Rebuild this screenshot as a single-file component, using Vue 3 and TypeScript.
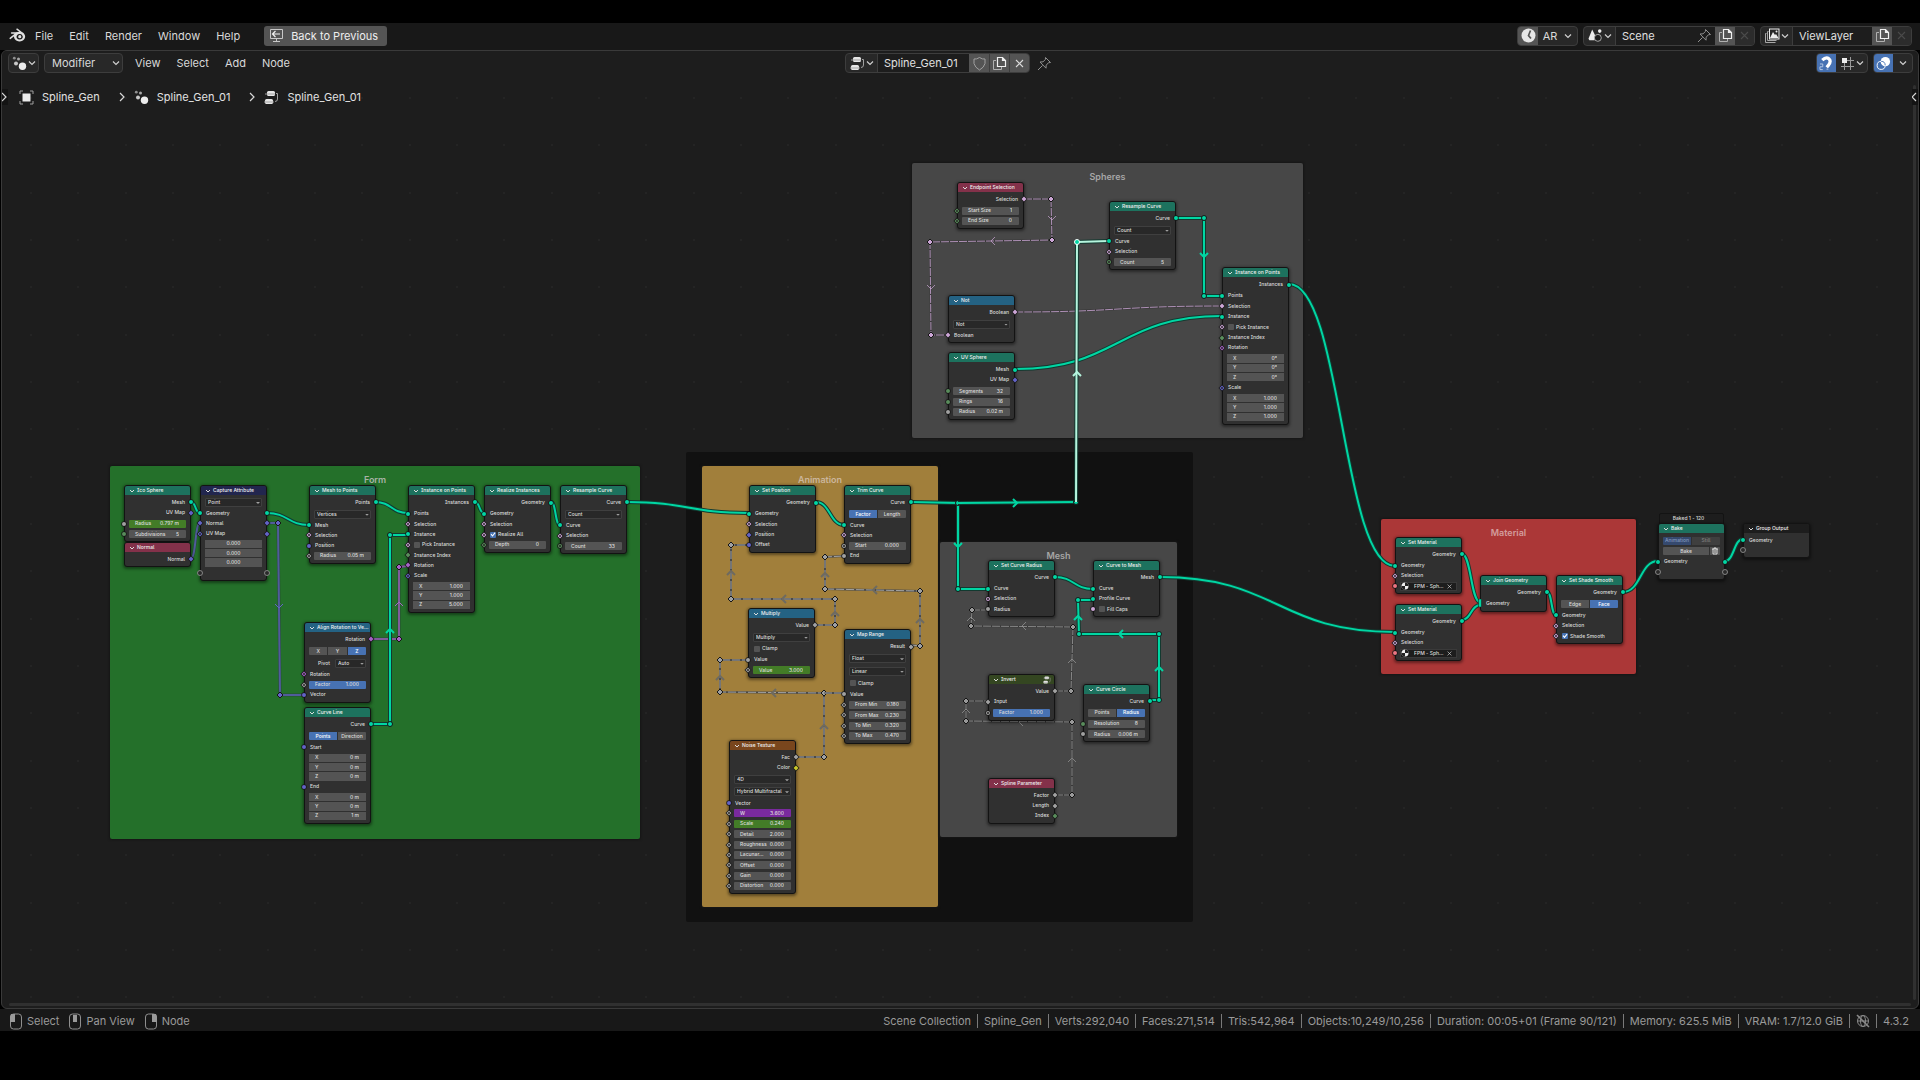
<script setup lang="ts">
import { computed } from 'vue'

type Kind = 'out' | 'in' | 'num' | 'check' | 'pick' | 'seg' | 'vec' | 'ext' | 'gap' | 'mat' | 'bake'
interface Row {
  kind: Kind
  units: number
  label?: string
  value?: string
  left?: string
  right?: string
  tone?: string
  on?: boolean
  items?: string[]
  active?: number
  bare?: boolean
}
interface GraphNode {
  title: string
  tone: string
  x: number
  y: number
  rows: Row[]
  group?: boolean
}
interface Link {
  tone: string
  style: 'solid' | 'field'
  points: number[][]
  curve?: boolean
  arrows?: [number, number, number][]
  joints?: number[][]
}

/* Screen pixels for one node unit at the current zoom */
const ZOOM = 0.475
/* Corner of the editor's drawing region */
const view = { x: 2, y: 51 }

const socketColor: Record<string, string> = {
  geo: '#00d6a3', vec: '#6363c7', bool: '#cca6d6', float: '#a1a1a1',
  int: '#598c5c', rot: '#a663c7', mat: '#eb7582', color: '#c7c729', ext: '#8a8a8a',
}

const out = (label: string, right: string): Row => ({ kind: 'out', units: 22, label, right })
const inp = (label: string, left: string, right?: string): Row => ({ kind: 'in', units: 22, label, left, right })
const num = (label: string, value: string, left: string, tone = ''): Row => ({ kind: 'num', units: 22, label, value, left, tone })
const check = (label: string, on: boolean, left = ''): Row => ({ kind: 'check', units: left ? 22 : 25, label, on, left })
const pick = (value: string, units = 25, label = ''): Row => ({ kind: 'pick', units, value, label })
const seg = (items: string[], active: number, units = 25, tone = ''): Row => ({ kind: 'seg', units, items, active, tone })
const vec = (items: string[], bare = false): Row => ({ kind: 'vec', units: 62, items, bare })
const gap: Row = { kind: 'gap', units: 2 }
const mat = (): Row => ({ kind: 'mat', units: 22, left: 'mat:o', value: 'FPM - Sph...' })

const setMaterial = (): Row[] => [out('Geometry', 'geo:o'), gap, inp('Geometry', 'geo:o'), inp('Selection', 'bool:D'), mat()]

const nodes: GraphNode[] = [
  { title: 'Ico Sphere', tone: 'geometry', x: 124, y: 485, rows: [out('Mesh', 'geo:o'), out('UV Map', 'vec:d'), gap, num('Radius', '0.797 m', 'float:o', 'keyed'), num('Subdivisions', '5', 'int:o')] },
  { title: 'Normal', tone: 'input', x: 124, y: 542, rows: [out('Normal', 'vec:d')] },
  { title: 'Capture Attribute', tone: 'attribute', x: 200, y: 485, rows: [pick('Point', 23), inp('Geometry', 'geo:o', 'geo:o'), inp('Normal', 'vec:d', 'vec:d'), inp('UV Map', 'vec:D', 'vec:d'), vec(['0.000', '0.000', '0.000'], true), { kind: 'ext', units: 22, left: 'ext:e', right: 'ext:e' }] },
  { title: 'Mesh to Points', tone: 'geometry', x: 309, y: 485, rows: [out('Points', 'geo:o'), gap, pick('Vertices'), inp('Mesh', 'geo:o'), inp('Selection', 'bool:D'), inp('Position', 'vec:o'), num('Radius', '0.05 m', 'float:D')] },
  { title: 'Instance on Points', tone: 'geometry', x: 408, y: 485, rows: [out('Instances', 'geo:o'), gap, inp('Points', 'geo:o'), inp('Selection', 'bool:D'), inp('Instance', 'geo:o'), check('Pick Instance', false, 'bool:D'), inp('Instance Index', 'int:d'), inp('Rotation', 'rot:d'), inp('Scale', 'vec:D'), vec(['1.000', '1.000', '5.000'])] },
  { title: 'Realize Instances', tone: 'geometry', x: 484, y: 485, rows: [out('Geometry', 'geo:o'), gap, inp('Geometry', 'geo:o'), inp('Selection', 'bool:D'), check('Realize All', true, 'bool:D'), num('Depth', '0', 'int:D')] },
  { title: 'Resample Curve', tone: 'geometry', x: 560, y: 485, rows: [out('Curve', 'geo:o'), gap, pick('Count'), inp('Curve', 'geo:o'), inp('Selection', 'bool:D'), num('Count', '33', 'int:O')] },
  { title: 'Align Rotation to Ve...', tone: 'converter', x: 304, y: 622, rows: [out('Rotation', 'rot:d'), gap, seg(['X', 'Y', 'Z'], 2), pick('Auto', 26, 'Pivot'), inp('Rotation', 'rot:D'), num('Factor', '1.000', 'float:D', 'full'), inp('Vector', 'vec:o')] },
  { title: 'Curve Line', tone: 'geometry', x: 304, y: 707, rows: [out('Curve', 'geo:o'), gap, seg(['Points', 'Direction'], 0), inp('Start', 'vec:o'), vec(['0 m', '0 m', '0 m']), inp('End', 'vec:o'), vec(['0 m', '0 m', '1 m'])] },
  { title: 'Set Position', tone: 'geometry', x: 749, y: 485, rows: [out('Geometry', 'geo:o'), gap, inp('Geometry', 'geo:o'), inp('Selection', 'bool:D'), inp('Position', 'vec:d'), inp('Offset', 'vec:o')] },
  { title: 'Trim Curve', tone: 'geometry', x: 844, y: 485, rows: [out('Curve', 'geo:o'), gap, seg(['Factor', 'Length'], 0), inp('Curve', 'geo:o'), inp('Selection', 'bool:D'), num('Start', '0.000', 'float:O'), inp('End', 'float:o')] },
  { title: 'Multiply', tone: 'converter', x: 748, y: 608, rows: [out('Value', 'float:d'), gap, pick('Multiply'), check('Clamp', false), inp('Value', 'float:o'), num('Value', '3.000', 'float:D', 'keyed')] },
  { title: 'Map Range', tone: 'converter', x: 844, y: 629, rows: [out('Result', 'float:d'), gap, pick('Float', 26), pick('Linear', 26), check('Clamp', false), inp('Value', 'float:o'), num('From Min', '0.180', 'float:D'), num('From Max', '0.230', 'float:D'), num('To Min', '0.320', 'float:D'), num('To Max', '0.470', 'float:D')] },
  { title: 'Noise Texture', tone: 'texture', x: 729, y: 740, rows: [out('Fac', 'float:d'), out('Color', 'color:d'), gap, pick('4D'), pick('Hybrid Multifractal', 26), inp('Vector', 'vec:o'), num('W', '3.600', 'float:D', 'driven'), num('Scale', '0.240', 'float:D', 'keyed'), num('Detail', '2.000', 'float:D'), num('Roughness', '0.000', 'float:D'), num('Lacunar...', '0.000', 'float:D'), num('Offset', '0.000', 'float:D'), num('Gain', '0.000', 'float:D'), num('Distortion', '0.000', 'float:D')] },
  { title: 'Set Curve Radius', tone: 'geometry', x: 988, y: 560, rows: [out('Curve', 'geo:o'), gap, inp('Curve', 'geo:o'), inp('Selection', 'bool:O'), inp('Radius', 'float:o')] },
  { title: 'Curve to Mesh', tone: 'geometry', x: 1093, y: 560, rows: [out('Mesh', 'geo:o'), gap, inp('Curve', 'geo:o'), inp('Profile Curve', 'geo:o'), check('Fill Caps', false, 'bool:o')] },
  { title: 'Invert', tone: 'nodegroup', x: 988, y: 674, group: true, rows: [out('Value', 'float:d'), inp('Input', 'float:d'), gap, num('Factor', '1.000', 'float:O', 'full')] },
  { title: 'Curve Circle', tone: 'geometry', x: 1083, y: 684, rows: [out('Curve', 'geo:o'), gap, seg(['Points', 'Radius'], 1), num('Resolution', '8', 'int:o'), num('Radius', '0.006 m', 'float:o')] },
  { title: 'Spline Parameter', tone: 'input', x: 988, y: 778, rows: [out('Factor', 'float:d'), out('Length', 'float:d'), out('Index', 'int:d')] },
  { title: 'Endpoint Selection', tone: 'input', x: 957, y: 182, rows: [out('Selection', 'bool:d'), gap, num('Start Size', '1', 'int:D'), num('End Size', '0', 'int:D')] },
  { title: 'Resample Curve', tone: 'geometry', x: 1109, y: 201, rows: [out('Curve', 'geo:o'), gap, pick('Count'), inp('Curve', 'geo:o'), inp('Selection', 'bool:D'), num('Count', '5', 'int:O')] },
  { title: 'Instance on Points', tone: 'geometry', x: 1222, y: 267, rows: [out('Instances', 'geo:o'), gap, inp('Points', 'geo:o'), inp('Selection', 'bool:d'), inp('Instance', 'geo:o'), check('Pick Instance', false, 'bool:D'), inp('Instance Index', 'int:d'), inp('Rotation', 'rot:D'), vec(['0°', '0°', '0°']), inp('Scale', 'vec:D'), vec(['1.000', '1.000', '1.000'])] },
  { title: 'Not', tone: 'converter', x: 948, y: 295, rows: [out('Boolean', 'bool:d'), gap, pick('Not'), inp('Boolean', 'bool:d')] },
  { title: 'UV Sphere', tone: 'geometry', x: 948, y: 352, rows: [out('Mesh', 'geo:o'), out('UV Map', 'vec:d'), gap, num('Segments', '32', 'int:o'), num('Rings', '16', 'int:o'), num('Radius', '0.02 m', 'float:o')] },
  { title: 'Set Material', tone: 'geometry', x: 1395, y: 537, rows: setMaterial() },
  { title: 'Set Material', tone: 'geometry', x: 1395, y: 604, rows: setMaterial() },
  { title: 'Join Geometry', tone: 'geometry', x: 1480, y: 575, rows: [out('Geometry', 'geo:o'), gap, inp('Geometry', 'geo:m'), gap] },
  { title: 'Set Shade Smooth', tone: 'geometry', x: 1556, y: 575, rows: [out('Geometry', 'geo:o'), gap, seg(['Edge', 'Face'], 1), inp('Geometry', 'geo:o'), inp('Selection', 'bool:D'), check('Shade Smooth', true, 'bool:D')] },
  { title: 'Bake', tone: 'geometry', x: 1658, y: 523, rows: [seg(['Animation', 'Still'], 0, 23, 'dim'), { kind: 'bake', units: 23 }, inp('Geometry', 'geo:o', 'geo:o'), { kind: 'ext', units: 22, left: 'ext:e', right: 'ext:e' }] },
  { title: 'Group Output', tone: 'output', x: 1743, y: 523, rows: [inp('Geometry', 'geo:o'), { kind: 'ext', units: 22, left: 'ext:e' }] },
]

const frames = [
  { title: '', tone: 'outer', x: 686, y: 452, w: 507, h: 470 },
  { title: 'Form', tone: 'form', x: 110, y: 466, w: 530, h: 373 },
  { title: 'Animation', tone: 'anim', x: 702, y: 466, w: 236, h: 441 },
  { title: 'Mesh', tone: 'grey', x: 940, y: 542, w: 237, h: 295 },
  { title: 'Spheres', tone: 'grey', x: 912, y: 163, w: 391, h: 275 },
  { title: 'Material', tone: 'material', x: 1381, y: 519, w: 255, h: 155 },
]

const wire = (a: number[], b: number[]): Link => ({ tone: 'geo', style: 'solid', points: [a, b], curve: true })

const links: Link[] = [
  wire([191, 502], [200, 513]),
  { tone: 'vec', style: 'field', points: [[191, 558], [200, 523]], curve: true },
  wire([267, 513], [309, 525]),
  { tone: 'vec', style: 'field', points: [[267, 523], [278, 523], [280, 695], [304, 695]], arrows: [[279, 606, 90]] },
  wire([375, 502], [408, 513]),
  { tone: 'rot', style: 'field', points: [[371, 639], [399, 639], [399, 567], [408, 566]], arrows: [[399, 604, -90]] },
  { tone: 'geo', style: 'solid', points: [[371, 724], [390, 724], [390, 535], [408, 535]], arrows: [[390, 631, -90]] },
  wire([475, 502], [484, 513]),
  wire([551, 502], [560, 525]),
  wire([627, 502], [749, 513]),
  wire([816, 502], [844, 525]),
  { tone: 'geo', style: 'solid', points: [[911, 502], [958, 503], [958, 589], [988, 589]], arrows: [[958, 545, 90]] },
  { tone: 'geo', style: 'solid', points: [[958, 503], [1076, 502]], arrows: [[1015, 503, 0]], joints: [[1076, 502]] },
  { tone: 'float', style: 'field', points: [[815, 625], [835, 625], [835, 599], [731, 599], [731, 545], [749, 545]], arrows: [[835, 614, -90], [784, 599, 180], [731, 573, -90]] },
  { tone: 'float', style: 'field', points: [[796, 757], [824, 757], [824, 693], [720, 692], [720, 660], [748, 660]], arrows: [[824, 727, -90], [774, 693, 180], [720, 678, -90]] },
  { tone: 'float', style: 'field', points: [[824, 693], [844, 693]] },
  { tone: 'float', style: 'field', points: [[911, 645], [920, 646], [920, 591], [825, 589], [825, 557], [844, 556]], arrows: [[920, 621, -90], [875, 590, 180], [825, 575, -90]] },
  wire([1055, 577], [1093, 589]),
  { tone: 'geo', style: 'solid', points: [[1150, 700], [1159, 700], [1159, 634], [1079, 634], [1078, 600], [1093, 600]], arrows: [[1159, 669, -90], [1121, 634, 180], [1078, 618, -90]] },
  { tone: 'thin', style: 'field', points: [[1055, 691], [1071, 691], [1073, 627], [971, 626], [972, 610], [988, 610]], arrows: [[1072, 661, -90], [1024, 626, 180], [971, 619, -90]] },
  { tone: 'thin', style: 'field', points: [[1055, 795], [1072, 795], [1072, 722], [966, 721], [966, 701], [988, 701]], arrows: [[1072, 760, -90], [1021, 722, 180], [966, 711, -90]] },
  wire([1160, 577], [1395, 632]),
  { tone: 'bool', style: 'field', points: [[1024, 199], [1051, 199], [1052, 240], [930, 242], [931, 335], [948, 335]], arrows: [[1052, 218, 90], [993, 241, 180], [931, 287, 90]] },
  { tone: 'bool', style: 'field', points: [[1015, 312], [1222, 306]], curve: true },
  wire([1015, 369], [1222, 316]),
  { tone: 'selected', style: 'solid', points: [[1076, 502], [1077, 242], [1109, 241]], arrows: [[1077, 374, -90]] },
  { tone: 'geo', style: 'solid', points: [[1176, 218], [1204, 218], [1204, 296], [1222, 296]], arrows: [[1204, 255, 90]] },
  wire([1289, 284], [1395, 566]),
  wire([1462, 554], [1480, 602]),
  wire([1462, 620], [1480, 605]),
  wire([1547, 592], [1556, 615]),
  wire([1623, 592], [1658, 561]),
  wire([1725, 561], [1743, 539]),
]

const linkColor: Record<string, string> = { ...socketColor, selected: '#b5f5de', thin: '#9a9a9a' }

function linkPath(link: Link): string {
  if (link.curve) {
    const [[ax, ay], [bx, by]] = link.points
    const reach = Math.round((bx - ax) / 2)
    return `M${ax} ${ay}C${ax + reach} ${ay} ${bx - reach} ${by} ${bx} ${by}`
  }
  return 'M' + link.points.map((p) => p.join(' ')).join('L')
}
const joints = (link: Link): number[][] => link.joints ?? (link.curve ? [] : link.points.slice(1, -1))
const unitsOf = (node: GraphNode): number => node.rows.reduce((sum, row) => sum + row.units, 28)
const nodeStyle = (node: GraphNode) => ({
  left: `${node.x - view.x}px`,
  top: `${node.y - view.y}px`,
  height: `${Math.round(unitsOf(node) * ZOOM) + 1}px`,
})

const dots = computed(() => {
  let d = ''
  for (let row = 0; row < 20; row++) {
    for (let col = 0; col < 41; col++) {
      d += `M${Math.round(30 + (col * 142) / 3)} ${Math.round(97 + (row * 142) / 3)}h2v2h-2z`
    }
  }
  return d
})

const topMenus = ['File', 'Edit', 'Render', 'Window', 'Help']
const nodeMenus = ['View', 'Select', 'Add', 'Node']
const stats = ['Scene Collection', 'Spline_Gen', 'Verts:292,040', 'Faces:271,514', 'Tris:542,964', 'Objects:10,249/10,256', 'Duration: 00:05+01 (Frame 90/121)', 'Memory: 625.5 MiB', 'VRAM: 1.7/12.0 GiB']
const crumbs = [
  { icon: 'i-object', text: 'Spline_Gen' },
  { icon: 'i-geonodes', text: 'Spline_Gen_01' },
  { icon: 'i-tree', text: 'Spline_Gen_01' },
]
const hints = [
  { text: 'Select', d: 'M2 1h4v8H1V4z' },
  { text: 'Pan View', d: 'M5 2h4v7H5z' },
  { text: 'Node', d: 'M8 1h4l1 3v5H8z' },
]
const axes = ['X', 'Y', 'Z']
</script>

<template>
  <svg class="symbols" aria-hidden="true">
    <symbol id="i-blender" viewBox="0 0 17 15">
      <path fill="none" stroke="#e0e0e0" stroke-width="1.5" stroke-linecap="round" stroke-linejoin="round" d="M8 1.2l4.4 3.4M2.6 4.9h7M1.2 10.4l6.2-5" />
      <path fill="#e0e0e0" fill-rule="evenodd" d="M10.6 3.7a5.6 4.9 0 1 1-.1 0zM10.6 6a3.1 2.8 0 1 0 .1 0z" />
      <circle cx="10.8" cy="8.7" r="1.6" fill="#e0e0e0" />
    </symbol>
    <symbol id="i-back" viewBox="0 0 15 15">
      <path fill="none" stroke="#c8c8c8" d="M1.500 1.500h12v9h-12zM7.500 10.500v3M4 13.500h7" />
      <path fill="none" stroke="#f0f0f0" stroke-width="1.200" d="M11 6H4M6.500 3L3.500 6l3 3" />
    </symbol>
    <symbol id="i-geonodes" viewBox="0 0 15 15">
      <circle cx="2.300" cy="2.200" r="1.400" fill="#8f8f8f" /><circle cx="6.500" cy="3" r="1.500" fill="#a8a8a8" />
      <circle cx="4" cy="7.500" r="2" fill="#c8c8c8" /><circle cx="10.500" cy="10.200" r="3.700" fill="#ececec" />
    </symbol>
    <symbol id="i-tree" viewBox="0 0 15 15">
      <rect x="3" y="1" width="8" height="5" rx="1.500" fill="#e6e6e6" /><rect x="1" y="9" width="8" height="5" rx="1.500" fill="#e6e6e6" />
      <path fill="none" stroke="#a0a0a0" d="M1 4h10M0 12h10M12 3.500h1.500v5.500q0 2.500-2.500 2.500" />
    </symbol>
    <symbol id="i-object" viewBox="0 0 15 15">
      <rect x="3.500" y="3.500" width="8" height="8" fill="#ececec" />
      <path fill="none" stroke="#a0a0a0" d="M1 4V1h3M11 1h3v3M14 11v3h-3M4 14H1v-3" />
    </symbol>
    <symbol id="i-chevron" viewBox="0 0 8 8"><path fill="none" stroke="#cfcfcf" stroke-width="1.200" d="M1 2.500l3 3 3-3" /></symbol>
    <symbol id="i-next" viewBox="0 0 8 10"><path fill="none" stroke="#d8d8d8" stroke-width="1.200" d="M2 1l4 4-4 4" /></symbol>
    <symbol id="i-shield" viewBox="0 0 15 15"><path fill="none" stroke="#a0a0a0" d="M7.500 1.500q3 2 5.500 1.500v4.500q-1 4-5.500 6.500Q3 11.500 2 7.500V3q2.500.5 5.500-1.500z" /></symbol>
    <symbol id="i-copy" viewBox="0 0 15 15">
      <path fill="none" stroke="#b0b0b0" d="M4 4.500H1.500v9h8V11" />
      <path fill="none" stroke="#f0f0f0" stroke-width="1.200" d="M5.500 1.500h5l3 3v6h-8zM10.500 1.500v3h3" />
    </symbol>
    <symbol id="i-close" viewBox="0 0 9 9"><path fill="none" stroke="currentColor" stroke-width="1.100" d="M1 1l7 7M8 1L1 8" /></symbol>
    <symbol id="i-pin" viewBox="0 0 15 15"><path fill="none" stroke="#909090" d="M8.500 1.500l5 5-2 .2-2.300 2.500-.2 3L3 6l3-.2L8.400 3.500zM5.500 9.500L1 14" /></symbol>
    <symbol id="i-clock" viewBox="0 0 15 15"><circle cx="7.500" cy="7.500" r="7" fill="#e6e6e6" /><path fill="none" stroke="#545454" stroke-width="1.700" d="M9.500 2.500L7.500 7.500l2.500 3" /></symbol>
    <symbol id="i-scene" viewBox="0 0 16 15">
      <path fill="#ececec" d="M4.500 1l4 8-1.500 3.500H1.500L.5 11z" /><circle cx="12.500" cy="2.800" r="1.900" fill="#ececec" />
      <circle cx="10.500" cy="10" r="3.700" fill="#1d1d1d" stroke="#b0b0b0" />
    </symbol>
    <symbol id="i-layers" viewBox="0 0 15 15">
      <path fill="none" stroke="#a8a8a8" d="M3.500 3.500h-1v9h9M1.500 5.500h-1v9h10" />
      <rect x="4.500" y="1" width="9.500" height="10" fill="none" stroke="#ececec" /><path fill="#ececec" d="M5 10l3-6 2 3 1-1 2.500 4z" /><circle cx="11.500" cy="3.500" r="1" fill="#ececec" />
    </symbol>
    <symbol id="i-magnet" viewBox="0 0 16 16">
      <path fill="none" stroke="#fff" stroke-width="3.400" d="M3.500 4.500q4-4 7-1.500t-.5 7l-1.800 2" /><path fill="none" stroke="#b9cbe6" d="M1 8.500h3v3H1v3h3M8 14h2" />
    </symbol>
    <symbol id="i-grid" viewBox="0 0 15 15">
      <path fill="none" stroke="#9a9a9a" d="M10.500 1v13M4.500 7v7M6 4.500h8M1 10.500h13" /><rect x="2" y="2" width="5" height="5" fill="#ececec" />
    </symbol>
    <symbol id="i-overlay" viewBox="0 0 16 16"><circle cx="10" cy="6" r="5" fill="#fff" /><circle cx="5.500" cy="10" r="4.300" fill="none" stroke="#fff" /><path fill="none" stroke="#4772b3" d="M5.500 5.700a4.300 4.300 0 0 1 4.300 4.300" /></symbol>
    <symbol id="i-offline" viewBox="0 0 14 14"><g fill="none" stroke="#8a8a8a"><circle cx="7" cy="7" r="5.500" /><ellipse cx="7" cy="7" rx="2.500" ry="5.500" /><path d="M1.500 7h11" /><path stroke-width="1.500" d="M1 1l12 12" /></g></symbol>
  </svg>

  <div class="app">
    <header class="topbar">
      <svg class="logo"><use href="#i-blender" /></svg>
      <nav class="menus"><button v-for="m in topMenus" :key="m" type="button">{{ m }}</button></nav>
      <button class="back" type="button"><svg class="ic"><use href="#i-back" /></svg>Back to Previous</button>
      <div class="top-right">
        <div class="group">
          <span class="cell lit"><svg class="ic"><use href="#i-clock" /></svg></span>
          <button class="cell ar" type="button">AR<svg class="chev"><use href="#i-chevron" /></svg></button>
        </div>
        <div class="group">
          <button class="cell browse" type="button" aria-label="Browse scene"><svg class="ic"><use href="#i-scene" /></svg><svg class="chev"><use href="#i-chevron" /></svg></button>
          <input class="name scene" aria-label="Scene name" value="Scene" />
          <span class="cell dark"><svg class="ic"><use href="#i-pin" /></svg></span>
          <button class="cell lit" type="button" aria-label="New scene"><svg class="ic"><use href="#i-copy" /></svg></button>
          <button class="cell off" type="button" aria-label="Delete scene"><svg class="x"><use href="#i-close" /></svg></button>
        </div>
        <div class="group">
          <button class="cell browse" type="button" aria-label="Browse view layer"><svg class="ic"><use href="#i-layers" /></svg><svg class="chev"><use href="#i-chevron" /></svg></button>
          <input class="name layer" aria-label="View layer name" value="ViewLayer" />
          <button class="cell lit" type="button" aria-label="New view layer"><svg class="ic"><use href="#i-copy" /></svg></button>
          <button class="cell off" type="button" aria-label="Delete view layer"><svg class="x"><use href="#i-close" /></svg></button>
        </div>
      </div>
    </header>

    <main class="editor">
      <div class="canvas">
        <svg class="wires"><g :transform="`translate(${-view.x} ${-view.y})`"><path :d="dots" fill="#242424" /></g></svg>
        <section v-for="f in frames" :key="f.x" class="frame" :class="f.tone" :style="{ left: f.x - view.x + 'px', top: f.y - view.y + 'px', width: f.w + 'px', height: f.h + 'px' }">
          <h2 v-if="f.title">{{ f.title }}</h2>
        </section>
        <svg class="wires">
          <g :transform="`translate(${-view.x} ${-view.y})`">
            <g v-for="(l, i) in links" :key="i" :class="['link', l.style, l.tone]" :style="{ color: linkColor[l.tone] }">
              <path class="shade" :d="linkPath(l)" />
              <path class="line" :d="linkPath(l)" />
              <path v-for="(a, k) in l.arrows" :key="'a' + k" class="arrow" d="M-2 -4L2 0L-2 4" :transform="`translate(${a[0]} ${a[1]}) rotate(${a[2]})`" />
              <template v-for="(j, k) in joints(l)" :key="'j' + k">
                <circle v-if="l.style === 'solid'" class="joint" :cx="j[0]" :cy="j[1]" r="2.500" />
                <path v-else class="joint" :d="`M${j[0]} ${j[1] - 3}l3 3-3 3-3-3z`" />
              </template>
            </g>
          </g>
        </svg>

        <div class="baked">Baked 1 - 120</div>

        <article v-for="(n, ni) in nodes" :key="ni" class="node" :class="n.tone" :style="nodeStyle(n)">
          <h3 class="title">
            <svg class="fold" viewBox="0 0 6 6"><path d="M1 2l2 2 2-2" /></svg>{{ n.title }}
            <svg v-if="n.group" class="group-mark"><use href="#i-tree" /></svg>
          </h3>
          <div class="pad"></div>
          <div v-for="(r, ri) in n.rows" :key="ri" class="row" :class="'k-' + r.kind" :style="{ flexGrow: r.units }">
            <template v-for="side in (['left', 'right'] as const)" :key="side">
              <svg v-if="r[side]" class="socket" :class="side" viewBox="-4 -4 8 8" :style="{ color: socketColor[r[side]!.split(':')[0]] }">
                <template v-if="/[oO]$/.test(r[side]!)">
                  <circle r="2.700" fill="#161616" /><circle r="2" fill="currentColor" /><circle v-if="r[side]!.endsWith('O')" r="1" fill="#222" />
                </template>
                <template v-else-if="/[dD]$/.test(r[side]!)">
                  <path d="M0-3.500L3.500 0 0 3.500-3.500 0z" fill="#161616" /><path d="M0-2.500L2.500 0 0 2.500-2.500 0z" fill="currentColor" /><path v-if="r[side]!.endsWith('D')" d="M0-1.200L1.200 0 0 1.200-1.200 0z" fill="#222" />
                </template>
                <rect v-else-if="r[side]!.endsWith('m')" x="-1.500" y="-4" width="3" height="8" fill="currentColor" stroke="#161616" stroke-width=".5" />
                <circle v-else r="2.500" fill="#2a2a2a" stroke="#8f8f8f" stroke-width=".9" />
              </svg>
            </template>

            <span v-if="r.kind === 'out' || r.kind === 'in'" class="text">{{ r.label }}</span>

            <label v-else-if="r.kind === 'num'" class="field" :class="r.tone"><span>{{ r.label }}</span><input :value="r.value" /></label>

            <label v-else-if="r.kind === 'check'" class="check"><input type="checkbox" :checked="r.on" />{{ r.label }}</label>

            <label v-else-if="r.kind === 'pick'" class="pick" :class="{ named: r.label }">
              <span v-if="r.label">{{ r.label }}</span>
              <span class="drop"><select :aria-label="r.label || r.value"><option>{{ r.value }}</option></select></span>
            </label>

            <div v-else-if="r.kind === 'seg'" class="seg" :class="r.tone">
              <button v-for="(s, si) in r.items" :key="s" type="button" :class="{ active: si === r.active }">{{ s }}</button>
            </div>

            <div v-else-if="r.kind === 'vec'" class="vec">
              <label v-for="(v, vi) in r.items" :key="vi" class="field" :class="{ bare: r.bare }"><span v-if="!r.bare">{{ axes[vi] }}</span><input :value="v" :aria-label="axes[vi]" /></label>
            </div>

            <div v-else-if="r.kind === 'mat'" class="mat">
              <svg viewBox="0 0 8 8"><circle cx="4" cy="4" r="3.500" fill="#eee" /><path fill="#222" d="M4 4V.5A3.500 3.500 0 0 1 7.500 4zM4 4v3.500A3.500 3.500 0 0 1 .5 4z" /></svg>
              <input :value="r.value" aria-label="Material" />
              <button type="button" aria-label="Unlink material"><svg><use href="#i-close" /></svg></button>
            </div>

            <div v-else-if="r.kind === 'bake'" class="seg bake">
              <button type="button">Bake</button>
              <button class="trash" type="button" aria-label="Delete bake"><svg viewBox="0 0 8 8"><path d="M1 2h6M3 2V1h2v1M2 2v5h4V2M4 3v3" /></svg></button>
            </div>
          </div>
          <div class="pad"></div>
        </article>
        <div class="hbar"></div>
        <div class="vbar"></div>
        <span class="tab left-tab"><svg><use href="#i-next" /></svg></span>
        <span class="tab right-tab"><svg><use href="#i-next" /></svg></span>
      </div>

      <header class="toolbar">
        <div class="side">
          <button class="group cell browse" type="button" aria-label="Editor type"><svg class="ic"><use href="#i-geonodes" /></svg><svg class="chev"><use href="#i-chevron" /></svg></button>
          <span class="group mode"><select aria-label="Node tree type"><option>Modifier</option></select><svg class="chev"><use href="#i-chevron" /></svg></span>
          <nav class="menus"><button v-for="m in nodeMenus" :key="m" type="button">{{ m }}</button></nav>
        </div>
        <div class="middle">
          <div class="group">
            <button class="cell browse" type="button" aria-label="Browse node tree"><svg class="ic"><use href="#i-tree" /></svg><svg class="chev"><use href="#i-chevron" /></svg></button>
            <input class="name tree" aria-label="Node tree name" value="Spline_Gen_01" />
            <button class="cell lit" type="button" aria-label="Fake user"><svg class="ic"><use href="#i-shield" /></svg></button>
            <button class="cell lit" type="button" aria-label="Duplicate"><svg class="ic"><use href="#i-copy" /></svg></button>
            <button class="cell lit" type="button" aria-label="Unlink"><svg class="x"><use href="#i-close" /></svg></button>
          </div>
          <svg class="ic"><use href="#i-pin" /></svg>
        </div>
        <div class="side end">
          <div class="group">
            <button class="cell blue" type="button" aria-label="Snap"><svg class="ic"><use href="#i-magnet" /></svg></button>
            <button class="cell browse" type="button" aria-label="Snap to"><svg class="ic"><use href="#i-grid" /></svg><svg class="chev"><use href="#i-chevron" /></svg></button>
          </div>
          <div class="group">
            <button class="cell blue" type="button" aria-label="Overlays"><svg class="ic"><use href="#i-overlay" /></svg></button>
            <button class="cell more" type="button" aria-label="Overlay options"><svg class="chev"><use href="#i-chevron" /></svg></button>
          </div>
        </div>
      </header>

      <nav class="crumbs">
        <template v-for="(c, i) in crumbs" :key="i">
          <svg v-if="i" class="sep"><use href="#i-next" /></svg>
          <a href="#"><svg class="ic"><use :href="'#' + c.icon" /></svg>{{ c.text }}</a>
        </template>
      </nav>
    </main>

    <footer class="status">
      <span v-for="h in hints" :key="h.text" class="hint">
        <svg viewBox="0 0 14 17"><rect x="1.500" y="1" width="11" height="15" rx="3" fill="none" stroke="#8f8f8f" /><path :d="h.d" fill="#9a9a9a" /></svg>{{ h.text }}
      </span>
      <div class="stats">
        <span v-for="s in stats" :key="s">{{ s }}</span>
        <span><svg><use href="#i-offline" /></svg></span>
        <span>4.3.2</span>
      </div>
    </footer>
  </div>
</template>

<style>
body { margin: 0; background: #000; }
</style>

<style scoped>
* { box-sizing: border-box; }
button, input, select { font: inherit; color: inherit; background: none; border: 0; padding: 0; margin: 0; border-radius: 0; appearance: none; min-width: 0; outline: none; }
svg { display: block; flex: none; }
.symbols { position: absolute; width: 0; height: 0; }

.app { display: flex; flex-direction: column; min-height: 100vh; padding: 23px 0 49px; background: #000; color: #d9d9d9; font: 11px/14px Inter, "Liberation Sans", sans-serif; overflow: hidden; }
.topbar { display: flex; align-items: center; height: 27px; padding: 0 8px 2px 9px; background: #181818; }
.logo { width: 17px; height: 15px; margin-right: 9px; }
.menus { display: flex; gap: 16px; }
.back { display: flex; align-items: center; gap: 7px; height: 20px; margin-left: 24px; padding: 0 9px 0 5px; border-radius: 3px; background: #545454; color: #eee; }
.ic { width: 15px; height: 15px; }
.chev { width: 8px; height: 8px; }
.x { width: 9px; height: 9px; }
.top-right { display: flex; gap: 5px; margin-left: auto; }
.group { display: flex; height: 20px; border: 1px solid #3d3d3d; border-radius: 4px; background: #282828; overflow: hidden; }
.cell { display: flex; align-items: center; justify-content: center; width: 20px; }
.cell.lit { background: #545454; }
.cell.lit + .cell.lit { border-left: 1px solid #3d3d3d; }
.cell.blue { width: 19px; background: #4772b3; }
.cell.more { width: 19px; }
.cell.off { width: 19px; color: #4a4a4a; background: #2c2c2c; }
.cell.dark { background: #1d1d1d; width: 22px; }
.cell.browse { width: 31px; gap: 1px; }
.cell.ar { width: 39px; gap: 7px; }
.name { background: #1d1d1d; border-left: 1px solid #3d3d3d; padding: 0 6px; color: #e0e0e0; }
.scene { width: 78px; }
.layer { width: 80px; }
.tree { width: 92px; }

.editor { position: relative; flex: 1; min-height: 600px; margin: 0 1px; border: 1px solid #3a3a3a; border-radius: 6px; background: #1d1d1d; overflow: hidden; }
.toolbar { position: relative; display: grid; grid-template-columns: 1fr auto 1fr; align-items: center; height: 24px; padding: 0 5px 0 6px; background: #1d1d1d; }
.side { display: flex; align-items: center; gap: 5px; }
.side .menus { margin-left: 7px; }
.side.end { justify-content: flex-end; }
.mode { align-items: center; width: 79px; padding-right: 2px; }
.mode select { flex: 1; padding: 0 7px; height: 18px; }
.middle { display: flex; align-items: center; gap: 7px; padding-right: 24px; }
.crumbs { position: relative; display: flex; align-items: center; width: max-content; margin: 15px 0 0 17px; height: 14px; }
.crumbs a { display: flex; align-items: center; gap: 8px; color: #e2e2e2; text-decoration: none; }
.sep { width: 8px; height: 10px; margin: 0 8px 0 18px; }

.canvas { position: absolute; inset: 0; }
.wires { position: absolute; inset: 0; width: 100%; height: 100%; }
.frame { position: absolute; border-radius: 2px; box-shadow: 0 0 2px 1px #161616; }
.frame h2 { margin: 8px 0 0; text-align: center; font-size: 9px; line-height: 12px; font-weight: 600; color: #a9b3a6; }
.outer { background: #111; box-shadow: none; }
.form { background: #24702a; }
.anim { background: #a17f3b; }
.anim h2 { color: #cbb69b; }
.material { background: #ab3737; }
.material h2 { color: #d39c9c; }
.grey { background: #474747; }
.grey h2 { color: #a6a6a6; }

.link path { fill: none; }
.solid .shade { stroke: #123a30; stroke-width: 4; }
.solid .line { stroke: currentColor; stroke-width: 2; }
.field .shade { stroke: #4a4a4a; stroke-width: 2; }
.field .line { stroke: currentColor; stroke-width: 1; stroke-dasharray: 8 2; }
.vec.field .shade, .rot.field .shade { stroke: #2a2a40; stroke-width: 3; opacity: .5; }
.vec.field .line, .rot.field .line { stroke-width: 2; stroke-dasharray: none; opacity: .7; }
.bool.field .shade, .thin.field .shade { stroke: #00000033; }
.bool.field .line, .thin.field .line { opacity: .8; stroke-dasharray: 8 1; }
.arrow { stroke: currentColor; stroke-width: 1; }
.float .arrow { stroke: #6e6a60; stroke-width: 2; }
.bool .arrow, .thin .arrow { opacity: .7; }
.solid .arrow { stroke-width: 2; }
.link .joint { fill: currentColor; stroke: #161616; stroke-width: 1; }
.link.selected .joint { fill: #00d6a3; stroke: #fff; }

.node { position: absolute; display: flex; flex-direction: column; width: 67px; border: 1px solid #131313; border-radius: 3px; background: #303030; box-shadow: 0 1px 3px 1px #00000070; font: 500 5px/7px Inter, "Liberation Sans", sans-serif; font-feature-settings: "cv05", "cv08"; color: #dcdcdc; }
.title { display: flex; align-items: center; flex: 20 0 0; min-height: 0; margin: 0; padding-left: 4px; gap: 2px; font: inherit; color: #f0f0f0; background: #1d725e; border-radius: 2px 2px 0 0; white-space: nowrap; overflow: hidden; }
.fold { width: 6px; height: 6px; }
.fold path { fill: none; stroke: #ddd; stroke-width: 1; }
.group-mark { width: 8px; height: 8px; margin: 0 3px 0 auto; }
.node.input .title { background: #83314a; }
.node.attribute .title { background: #22264e; }
.node.converter .title { background: #246283; }
.node.texture .title { background: #79461d; }
.node.nodegroup .title { background: #344621; }
.node.output .title { background: #1d1d1d; }
.pad { flex: 4 0 0; }
.row { position: relative; display: flex; align-items: center; flex: 1 0 0; min-height: 0; padding: 0 4px; white-space: nowrap; }
.k-out { justify-content: flex-end; }
.text { padding: 0 1px; }
.socket { position: absolute; width: 8px; height: 8px; top: calc(50% - 4px); }
.socket.left { left: -5px; }
.socket.right { right: -5px; }
.field { display: flex; align-items: center; flex: 1; min-width: 0; height: 8px; padding: 0 7px 0 6px; background: #545454; border-radius: 1px; }
.field input { flex: 1; width: 0; height: 7px; text-align: right; }
.field.keyed { background: #437c27; }
.field.driven { background: #7a2a9e; }
.field.full { background: #4772b3; }
.vec { display: flex; flex-direction: column; flex: 1; align-self: stretch; gap: 1px; padding: 1px 0; }
.vec .field { height: auto; flex: 1; min-height: 0; border-radius: 0; }
.field.bare input { text-align: center; }
.field.bare { padding: 0; }
.check { display: flex; align-items: center; gap: 2px; padding-left: 1px; }
.check input { width: 6px; height: 6px; background: #545454; border-radius: 1px; }
.check input:checked { background: #4772b3; }
.check input:checked::after { content: ""; display: block; width: 6px; height: 6px; background: #fff; clip-path: polygon(10% 50%, 25% 38%, 42% 60%, 78% 12%, 92% 25%, 42% 88%); }
.pick { display: flex; align-items: center; flex: 1; gap: 5px; }
.pick.named > span:first-child { flex: 1; text-align: right; }
.drop { position: relative; display: flex; flex: 1; height: 9px; border: 1px solid #3f3f3f; border-radius: 1px; background: #282828; }
.named .drop { flex: none; width: 31px; }
.drop select { flex: 1; padding: 0 2px; height: 7px; }
.drop::after { content: ""; position: absolute; right: 1px; top: 3px; width: 4px; height: 2px; background: #a0a0a0; clip-path: polygon(0 0, 100% 0, 50% 100%); }
.seg { display: flex; flex: 1; gap: 1px; height: 8px; border-radius: 1px; overflow: hidden; }
.seg button { flex: 1; background: #545454; text-align: center; }
.seg button.active { background: #4772b3; color: #fff; }
.seg.dim button { background: #3f3f3f; color: #808080; }
.seg.dim button.active { background: #35496e; color: #8498bd; }
.seg .trash { flex: none; width: 10px; display: flex; align-items: center; justify-content: center; }
.trash svg { width: 8px; height: 8px; fill: none; stroke: #ddd; stroke-width: 1; }
.mat { display: flex; align-items: center; flex: 1; height: 9px; border: 1px solid #3a3a3a; background: #1d1d1d; }
.mat svg { width: 8px; height: 8px; }
.mat input { flex: 1; width: 0; padding-left: 5px; height: 7px; }
.mat button { width: 9px; }
.mat button svg { width: 5px; height: 5px; }
.baked { position: absolute; left: 1657px; top: 462px; width: 65px; height: 12px; border: 1px solid #131313; border-radius: 2px 2px 0 0; background: #1d1d1d; font: 500 5px/9px Inter, "Liberation Sans", sans-serif; text-align: center; padding-right: 6px; }

.hbar { position: absolute; left: 7px; right: 7px; bottom: 2px; height: 3px; border-radius: 2px; background: #303030; }
.vbar { position: absolute; right: 2px; top: 34px; bottom: 8px; width: 3px; border-radius: 2px; background: #303030; }
.tab { position: absolute; top: 38px; height: 16px; display: flex; align-items: center; width: 6px; background: #141414; overflow: hidden; }
.tab svg { width: 8px; height: 10px; }
.left-tab { left: 0; }
.left-tab svg { margin-left: -2px; }
.right-tab { right: 0; transform: scaleX(-1); }

.status { display: flex; align-items: center; height: 22px; padding: 2px 11px 0 9px; background: #181818; color: #9a9a9a; white-space: nowrap; }
.hint { display: flex; align-items: center; gap: 4px; margin-right: 9px; }
.hint svg { width: 14px; height: 17px; }
.stats { display: flex; align-items: center; margin-left: auto; }
.stats span { display: flex; align-items: center; height: 14px; padding: 0 6px; border-left: 1px solid #7a7a7a; }
.stats span:first-child { border: 0; }
.stats span:last-child { padding-right: 0; }
.stats svg { width: 14px; height: 14px; }
</style>
